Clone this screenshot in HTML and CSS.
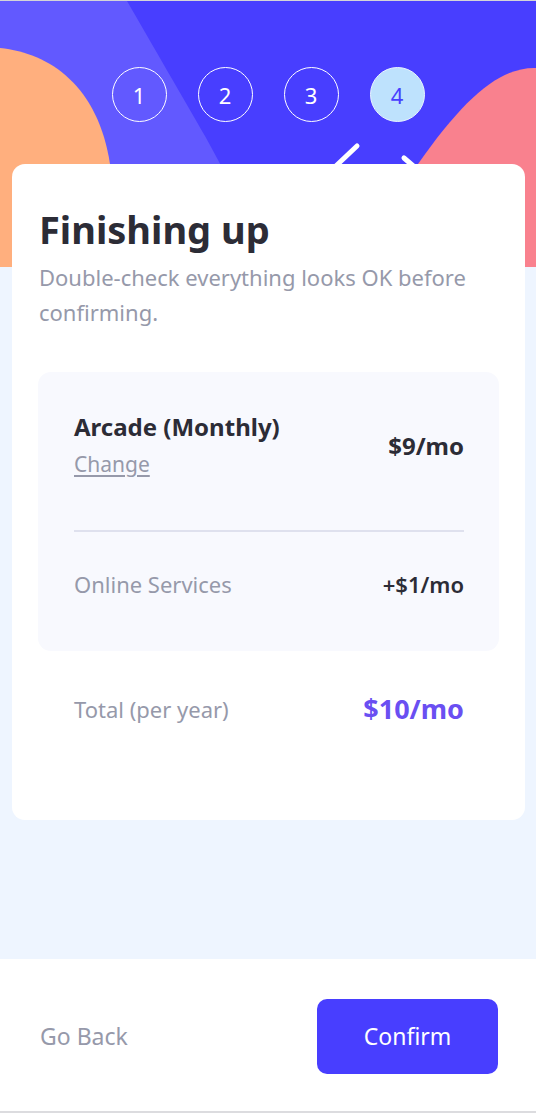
FILE: index.html
```html
<!DOCTYPE html>
<html lang="en">
<head>
<meta charset="utf-8">
<title>Finishing up</title>
<link rel="stylesheet" href="styles.css">
</head>
<body>
<div class="app">
  <header class="hero">
    <svg class="hero-bg" viewBox="0 0 536 266" preserveAspectRatio="none" aria-hidden="true">
      <rect width="536" height="266" fill="#483eff"/>
      <path d="M0 0 H127 C150 40 185 100 205 135 C230 180 250 220 262 266 H0 Z" fill="#6259ff"/>
      <path d="M0 47 C50 52 98 85 110 163 C114 200 114 240 112 266 H0 Z" fill="#ffaf7e"/>
      <path d="M536 67 C500 66 465 96 418 163 C400 190 392 230 390 266 H536 Z" fill="#f9818e"/>
      <path d="M357 145 L320 180" stroke="#fff" stroke-width="5" stroke-linecap="round" fill="none"/>
      <path d="M404 157 L425 175" stroke="#fff" stroke-width="5" stroke-linecap="round" fill="none"/>
    </svg>
    <ol class="steps">
      <li class="step">1</li>
      <li class="step">2</li>
      <li class="step">3</li>
      <li class="step step-active">4</li>
    </ol>
  </header>

  <main class="main">
    <section class="card">
      <h1 class="title">Finishing up</h1>
      <p class="subtitle">Double-check everything looks OK before confirming.</p>

      <div class="summary">
        <div class="plan-row">
          <div class="plan-info">
            <div class="plan-name">Arcade (Monthly)</div>
            <a class="plan-change" href="#">Change</a>
          </div>
          <div class="plan-price">$9/mo</div>
        </div>
        <div class="divider"></div>
        <div class="addon-row">
          <span class="addon-name">Online Services</span>
          <span class="addon-price">+$1/mo</span>
        </div>
      </div>

      <div class="total-row">
        <span class="total-label">Total (per year)</span>
        <span class="total-price">$10/mo</span>
      </div>
    </section>
  </main>

  <footer class="footer">
    <button class="btn-back" type="button">Go Back</button>
    <button class="btn-confirm" type="button">Confirm</button>
  </footer>
</div>
</body>
</html>
```

FILE: styles.css
```css
* {
  box-sizing: border-box;
}

html, body {
  margin: 0;
  padding: 0;
}

body {
  font-family: "Noto Sans", "Open Sans", sans-serif;
  background: #ffffff;
  color: #2c2c36;
}

.app {
  display: flex;
  flex-direction: column;
  min-height: 1113px;
  border-top: 1px solid #d4d4d8;
  border-bottom: 2px solid #dcdcdf;
}

.hero {
  position: relative;
  height: 266px;
  overflow: hidden;
  flex: none;
}

.hero-bg {
  position: absolute;
  inset: 0;
  width: 100%;
  height: 100%;
  display: block;
}

.steps {
  position: relative;
  list-style: none;
  margin: 0;
  padding: 66px 0 0;
  display: flex;
  justify-content: center;
  gap: 31px;
}

.step {
  width: 55px;
  height: 55px;
  border: 1.5px solid #ffffff;
  border-radius: 50%;
  display: flex;
  align-items: center;
  justify-content: center;
  color: #ffffff;
  font-size: 22px;
  font-weight: 400;
}

.step-active {
  background: #bee2fd;
  color: #483eff;
  border-color: #e9f4ff;
}

.main {
  position: relative;
  z-index: 1;
  flex: 1;
  background: #eef5ff;
  padding: 0 11px 0 12px;
}

.card {
  margin-top: -103px;
  background: #ffffff;
  border-radius: 13px;
  padding: 41px 26px 93px 26px;
}

.title {
  margin: 0 0 0 1px;
  font-size: 38px;
  line-height: 48px;
  font-weight: 700;
  color: #2c2c36;
}

.subtitle {
  margin: 7px 0 0 1px;
  font-size: 22px;
  line-height: 35px;
  color: #9699aa;
}

.summary {
  margin-top: 42px;
  background: #f8f9fe;
  border-radius: 13px;
  padding: 38px 35px 52px 36px;
}

.plan-row {
  display: flex;
  justify-content: space-between;
  align-items: center;
}

.plan-name {
  font-size: 24px;
  font-weight: 700;
  line-height: 34px;
  color: #2c2c36;
}

.plan-change {
  display: inline-block;
  margin-top: 3px;
  font-size: 21px;
  line-height: 34px;
  color: #9699aa;
  text-decoration: underline;
  text-underline-offset: 3px;
}

.plan-price {
  font-size: 24px;
  font-weight: 700;
  color: #2c2c36;
}

.divider {
  height: 2px;
  background: #dfe1ee;
  margin: 49px 0 37px;
}

.addon-row,
.total-row {
  display: flex;
  justify-content: space-between;
  align-items: center;
}

.addon-name {
  font-size: 22px;
  line-height: 30px;
  color: #9699aa;
}

.addon-price {
  font-size: 22px;
  font-weight: 600;
  color: #2c2c36;
}

.total-row {
  padding: 39px 35px 0 36px;
}

.total-label {
  font-size: 22px;
  line-height: 36px;
  color: #9699aa;
}

.total-price {
  font-size: 27px;
  font-weight: 700;
  color: #6a4ff2;
}

.footer {
  flex: none;
  height: 152px;
  background: #ffffff;
  display: flex;
  align-items: center;
  justify-content: space-between;
  padding: 2px 38px 0 40px;
}

.btn-back {
  border: none;
  background: none;
  padding: 0;
  font-family: inherit;
  font-size: 23px;
  color: #9699aa;
  cursor: pointer;
}

.btn-confirm {
  border: none;
  background: #483eff;
  color: #ffffff;
  font-family: inherit;
  font-size: 23px;
  width: 181px;
  height: 75px;
  border-radius: 10px;
  cursor: pointer;
}
```
